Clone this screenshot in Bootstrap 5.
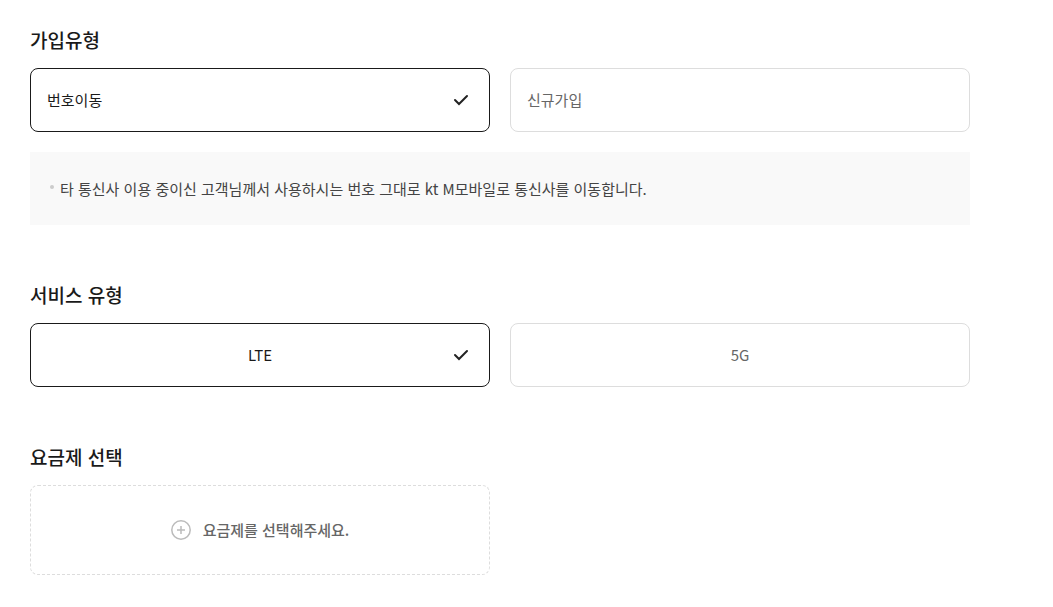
<!DOCTYPE html>
<html lang="ko">
<head>
<meta charset="utf-8">
<meta name="viewport" content="width=device-width, initial-scale=1">
<title>가입 정보</title>
<link href="https://cdn.jsdelivr.net/npm/bootstrap@5.3.0/dist/css/bootstrap.min.css" rel="stylesheet">
<style>
  body { font-family: "Noto Sans CJK KR", sans-serif; color: #1a1a1a; }
  .join-form { max-width: 1000px; padding: 28px 30px; }
  .form-section + .form-section { margin-top: 58px; }
  .section-title { font-size: 19px; line-height: 24px; font-weight: 500; margin: 0 0 16px; }
  .choice-row { --bs-gutter-x: 20px; }
  .choice { min-height: 64px; padding: 0 16px; border: 1px solid #ddd; border-radius: 8px; font-size: 15px; line-height: 24px; color: #666; cursor: pointer; }
  .choice svg { display: none; }
  .btn-check:checked + .choice { border-color: #1a1a1a; color: #1a1a1a; }
  .btn-check:checked + .choice svg { display: block; right: 20px; }
  .notice { margin-top: 20px; padding: 24px 20px; background: #f9f9f9; font-size: 15px; line-height: 25px; color: #444; }
  .notice-dot { width: 4px; height: 4px; margin: 9px 6px 0 0; background: #ccc; }
  .plan-button { min-height: 90px; gap: 12px; border: 1px dashed #ddd; border-radius: 8px; font-size: 15px; line-height: 24px; font-weight: 500; color: #666; background: #fff; }
</style>
</head>
<body>
<main><form class="join-form">
  <section class="form-section">
    <h2 class="section-title" id="join-title">가입유형</h2>
    <div class="row choice-row" role="radiogroup" aria-labelledby="join-title">
      <div class="col-6">
        <input class="btn-check" type="radio" name="join" id="join-move" checked>
        <label class="choice d-flex align-items-center position-relative" for="join-move">번호이동
          <svg class="position-absolute" width="16" height="12" viewBox="0 0 16 12" fill="none" stroke="#222" stroke-width="2" stroke-linecap="round" aria-hidden="true"><path d="M2 6 6 10 14 2"/></svg></label>
      </div>
      <div class="col-6">
        <input class="btn-check" type="radio" name="join" id="join-new">
        <label class="choice d-flex align-items-center position-relative" for="join-new">신규가입</label>
      </div>
    </div>
    <div class="notice d-flex">
      <span class="notice-dot rounded-circle flex-shrink-0"></span>
      <span>타 통신사 이용 중이신 고객님께서 사용하시는 번호 그대로 kt M모바일로 통신사를 이동합니다.</span>
    </div>
  </section>
  <section class="form-section">
    <h2 class="section-title" id="service-title">서비스 유형</h2>
    <div class="row choice-row" role="radiogroup" aria-labelledby="service-title">
      <div class="col-6">
        <input class="btn-check" type="radio" name="service" id="service-lte" checked>
        <label class="choice d-flex align-items-center justify-content-center position-relative" for="service-lte">LTE
          <svg class="position-absolute" width="16" height="12" viewBox="0 0 16 12" fill="none" stroke="#222" stroke-width="2" stroke-linecap="round" aria-hidden="true"><path d="M2 6 6 10 14 2"/></svg></label>
      </div>
      <div class="col-6">
        <input class="btn-check" type="radio" name="service" id="service-5g">
        <label class="choice d-flex align-items-center justify-content-center position-relative" for="service-5g">5G</label>
      </div>
    </div>
  </section>
  <section class="form-section">
    <h2 class="section-title">요금제 선택</h2>
    <div class="row choice-row"><div class="col-6">
      <button type="button" class="plan-button w-100 d-flex align-items-center justify-content-center">
        <svg width="20" height="20" viewBox="0 0 20 20" fill="none" stroke="#bbb" stroke-width="1.5" aria-hidden="true"><circle cx="10" cy="10" r="9.2"/><path d="M6 10h8M10 6v8"/></svg>
        <span>요금제를 선택해주세요.</span>
      </button>
    </div></div>
  </section>
</form></main>
<script src="https://cdn.jsdelivr.net/npm/bootstrap@5.3.0/dist/js/bootstrap.bundle.min.js"></script>
</body>
</html>
